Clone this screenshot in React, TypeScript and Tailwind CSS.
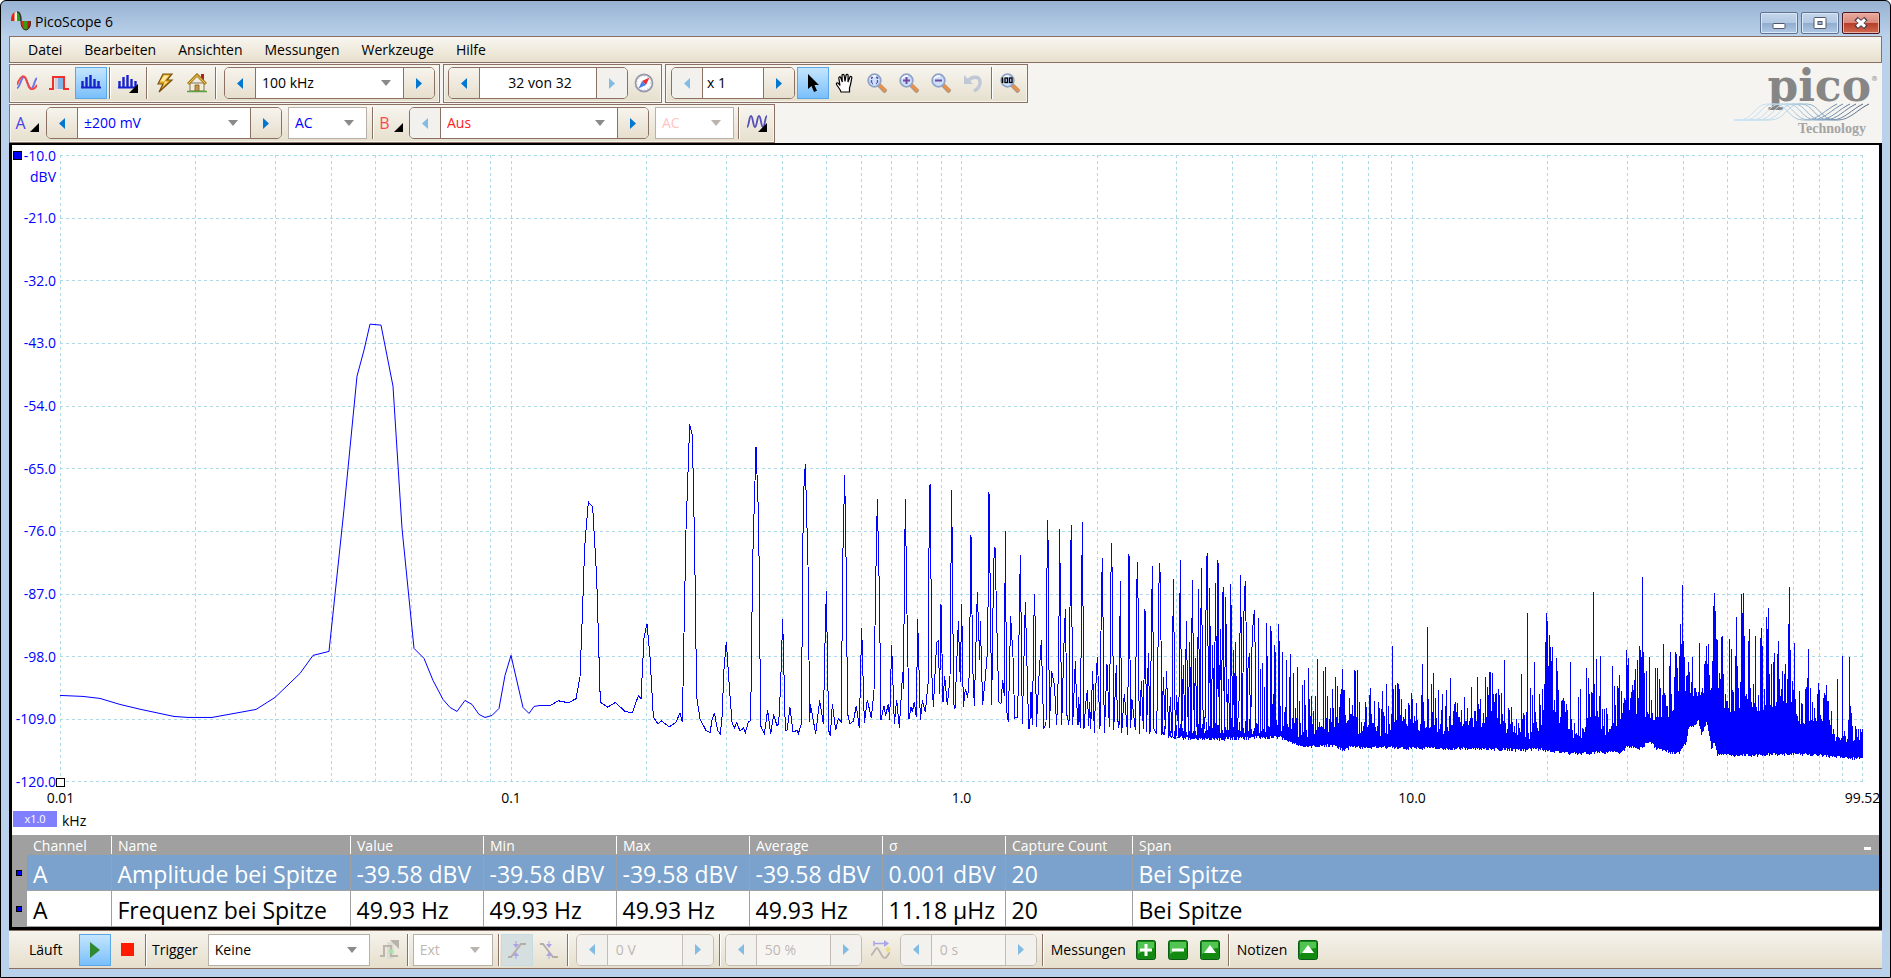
import { useMemo } from "react";
import type { ReactNode } from "react";
import clsx from "clsx";

type Point = [number, number];

const menuItems = ["Datei", "Bearbeiten", "Ansichten", "Messungen", "Werkzeuge", "Hilfe"];

const dbLabels = ["-10.0", "-21.0", "-32.0", "-43.0", "-54.0", "-65.0", "-76.0", "-87.0", "-98.0", "-109.0", "-120.0"];
const freqLabels = ["0.01", "0.1", "1.0", "10.0", "99.52"];

const columns = [
    { title: "Channel", width: "w-[84px]" },
    { title: "Name", width: "w-[239px]" },
    { title: "Value", width: "w-[133px]" },
    { title: "Min", width: "w-[133px]" },
    { title: "Max", width: "w-[133px]" },
    { title: "Average", width: "w-[133px]" },
    { title: "σ", width: "w-[123px]" },
    { title: "Capture Count", width: "w-[127px]" },
    { title: "Span", width: "" },
];

const measurements = [
    ["A", "Amplitude bei Spitze", "-39.58 dBV", "-39.58 dBV", "-39.58 dBV", "-39.58 dBV", "0.001 dBV", "20", "Bei Spitze"],
    ["A", "Frequenz bei Spitze", "49.93 Hz", "49.93 Hz", "49.93 Hz", "49.93 Hz", "11.18 µHz", "20", "Bei Spitze"],
];

/* ---------- spectrum data ---------- */

// Fundamental, 10 Hz up to about 115 Hz
const fundamental =
    "60,695 83,696 100,698 120,704 141,709 174,716 188,717 212,717 234,713 256,709 275,697 300,673 313,655 329,651 344,509 357,376 364,350 370,324 381,325 393,386 402,528 414,648 424,658 433,680 443,699 450,707 457,711 465,700 472,704 479,714 485,717 492,715 499,708 505,675 511,655 523,707 529,713 534,706 540,705";

// Harmonics up to 1.5 kHz
const harmonics =
    "0,916 30,916 55,901 85,907 108,895 120,830 128,620 134,440 145,305 158,320 170,530 181,905 203,920 226,906 255,933 277,937 295,886 303,895 312,712 321,670 330,770 340,950 354,970 364,961 388,979 408,966 420,937 427,965 432,700 438,390 449,72 457,105 464,445 470,890 480,955 498,990 510,997 516,960 523,937 533,990 541,1000 547,940 551,820 559,724 568,860 576,965 583,983 590,966 600,992 611,982 616,997 625,965 632,960 638,480 648,139 656,360 662,976 673,1000 683,928 692,1000 701,942 711,976 716,970 722,850 728,657 736,990 741,990 750,921 759,994 772,990 775,1000 784,970 790,290 796,190 804,495 809,965 811,910 827,1000 839,900 850,970 854,770 859,573 866,990 871,1006 877,910 887,989 895,955 904,965 908,490 914,225 920,590 922,937 930,970 940,962 949,916 958,982 965,682 973,967 982,898 994,953 1002,870 1007,550 1012,297 1018,570 1023,958 1032,916 1037,945 1045,910 1049,958 1055,735 1063,970 1070,898 1078,982 1088,815 1090,865 1096,297 1101,640 1107,955 1113,920 1117,935 1123,904 1129,950 1133,657 1141,960 1147,900 1156,935 1165,840 1168,260 1171,252 1175,810 1180,920 1190,725 1195,720 1199,880 1203,612 1209,905 1214,828 1222,915 1230,830 1235,270 1241,910 1245,926 1255,663 1261,845 1265,612 1270,920 1276,865 1283,892 1288,820 1293,405 1298,795 1303,917 1312,576 1319,780 1321,663 1328,914 1337,820 1343,745 1347,276 1355,914 1361,485 1365,440 1373,780 1377,905 1383,910 1388,838 1393,887 1396,393 1400,930 1405,965 1412,648 1419,770 1424,953 1433,950 1441,465 1447,970 1456,606 1466,985 1469,970";

// 1.4 kHz up to 5 kHz
const upperHarmonics =
    "89,745 93,635 97,735 103,342 106,437 109,740 118,570 124,480 131,745 138,730 142,120 145,205 148,742 155,573 163,612 170,735 176,550 179,145 185,735 192,490 196,387 201,705 207,733 211,270 214,135 218,735 226,543 229,645 234,735 236,650 241,742 247,126 252,745 257,672 262,630 266,738 269,666 272,745 278,573 283,758 287,627 292,531 300,745 304,360 307,234 313,758 317,662 321,552 328,740 334,189 337,292 341,750 349,555 352,710 357,742 361,303 365,758 373,640 383,765 387,222 392,742 396,657 406,748 410,322 413,246 418,762 424,603 430,745 435,387 440,755 445,519 450,762 457,258 462,745 470,760 478,249 481,288 486,765 490,591 496,745 499,573 507,765 511,651 516,758 520,297 526,765 530,645 536,760 541,240 545,765 550,555 555,770 559,423 565,765 569,486 573,773 577,300 583,765 586,534 592,778 595,327 600,770 604,264 610,770 616,700 619,246 622,219 626,766 629,322 633,758 638,495 642,760 647,309 650,765 654,240 658,783 661,447 665,745 667,360 670,321 673,783 677,351 682,740 685,597 690,770 692,312 695,490 698,765 701,510 705,770 707,486 710,780 718,645 722,285 726,765 733,333 737,303 741,770 743,576 748,519 752,765 755,525 760,411 764,390 768,760";

const midPeaks =
    "776,414 782,567 788,549 794,620 799,429 803,528 812,438 815,453 820,640 824,495 827,516 836,432 839,483 842,678 848,516 855,680 860,540 868,590 871,522 880,579 886,684 893,561 898,662 907,615 913,600 917,675 925,564 929,655 935,648 945,648 952,537 970,573 976,561 982,648 991,684 998,627 1006,591 1012,618 1018,680 1025,625 1028,567 1034,630 1048,654 1063,570 1066,573 1073,570 1096,666 1107,645 1112,624 1123,662 1135,666 1147,633 1159,612 1165,678 1177,498 1180,625 1186,615 1192,609 1195,612 1198,625 1204,657 1216,687 1234,639 1237,655 1249,669 1264,645 1268,552 1282,441 1285,657 1294,612 1299,579 1315,630 1327,642";
const midFloor = "280,748 380,755 450,760 570,770 720,770 840,765 870,780 900,792 1000,792 1035,806 1050,795 1100,796 1320,800";
const midBody = "280,750 450,750 570,752 620,735 700,742 768,738 850,740 900,752 960,745 1000,735 1030,690 1045,715 1080,745 1110,715 1150,752 1190,705 1215,735 1240,715 1265,735 1290,738 1320,742";

// 12.5 kHz up to the end of the span
const highPeaks =
    "7,462 19,450 31,414 43,490 73,471 94,441 103,512 112,411 115,492 121,477 136,411 142,441 145,465 149,396 152,396 157,399 160,460 167,462 178,465 184,459 193,360 208,510 214,500 229,537 244,402 253,525 262,219 271,444 277,465 283,366 298,462 307,447 313,430 316,306 319,219 322,243 325,378 328,285 331,321 334,363 337,321 349,354 352,393 355,450 364,483 370,474 391,366 415,471 421,447 439,384 445,414 448,460 460,156 463,432 470,357 481,348 487,507 502,522 517,378 523,438 532,438 538,405 544,453 559,330 562,375 565,354 571,474 580,450 583,420 586,387 592,360 598,318 601,330 604,351 607,111 610,336 613,399 619,393 628,351 634,480 646,384 652,384 658,417 661,444 670,312 676,465 688,378 691,336 694,460 703,411 706,336 709,340 712,384 718,348 721,252 724,312 727,135 730,303 733,351 739,408 745,366 748,396 754,426 757,351 763,444 775,456 778,309 784,456 793,370 796,363 799,318 802,372 805,312 817,363 820,198 823,159 826,213 829,297 832,300 838,399 844,291 847,288 850,402 859,483 868,297 874,327 880,456 886,348 889,231 892,378 901,426 904,162 907,219 910,159 913,288 919,460 925,303 928,267 931,444 940,432 946,288 955,465 961,294 964,264 967,318 979,231 982,267 985,204 988,402 994,372 1000,366 1003,339 1012,342 1015,303 1018,417 1027,393 1036,372 1042,417 1045,252 1048,141 1051,330 1057,423 1063,309 1066,477 1078,453 1084,489 1096,447 1099,441 1102,414 1105,327 1111,444 1117,486 1132,462 1135,429 1150,474 1153,459 1156,465 1159,435 1162,483 1168,540 1192,417 1207,348 1228,351 1231,498 1237,558 1249,567 1255,567 1264,576";
const highFloor =
    "0,622 60,620 150,620 240,625 300,622 400,636 470,632 540,632 560,615 600,620 630,595 645,618 690,632 720,632 740,598 745,560 770,545 775,535 785,578 800,540 815,622 823,598 832,640 900,640 1100,636 1200,646 1268,650";
const highBody =
    "0,560 60,550 130,540 160,500 200,560 250,580 300,560 320,430 350,520 400,570 430,580 460,500 500,575 520,545 560,500 600,500 640,520 700,520 720,450 760,455 830,430 860,500 890,510 920,480 970,500 1050,470 1080,550 1150,520 1180,580 1268,595";

const parse = (data: string): Point[] => data.split(" ").map((p) => p.split(",").map(Number) as Point);

function interpolate(points: Point[], x: number) {
    for (let i = 1; i < points.length; i++) {
        const [x0, y0] = points[i - 1];
        const [x1, y1] = points[i];
        if (x <= x1) return y0 + ((y1 - y0) * (x - x0)) / (x1 - x0);
    }
    return points[points.length - 1][1];
}

function noisePath(from: number, to: number, peaks: string, floor: string, body: string, spread: number) {
    const floorPoints = parse(floor);
    const bodyPoints = parse(body);
    const peakPoints = peaks ? parse(peaks) : [];
    let seed = 7919;
    const random = () => {
        seed = (seed * 16807) % 2147483647;
        return seed / 2147483647;
    };

    let d = "";
    for (let x = from; x <= to; x += 3) {
        const bottom = interpolate(floorPoints, x) + random() * 10;
        const noise = interpolate(bodyPoints, x) + random() * 24 - Math.pow(random(), 3) * spread;
        const peak = peakPoints.find(([px]) => Math.abs(px - x) <= 1);
        d += `M${x} ${Math.round(peak ? peak[1] : noise)}V${Math.round(bottom)}`;
    }
    return d;
}

function Spectrum() {
    const mid = useMemo(() => noisePath(772, 1320, midPeaks, midFloor, midBody, 90), []);
    const between = useMemo(() => noisePath(490, 769, "", midFloor, midBody, 45), []);
    const high = useMemo(() => noisePath(1, 1267, highPeaks, highFloor, highBody, 90), []);

    const verticals: number[] = [];
    for (let decade = 0; decade < 4; decade++) {
        for (let n = 1; n < 10; n++) {
            verticals.push(1 + 1352 * (decade + Math.log10(n)));
        }
    }
    verticals.push(5407);

    return (
        <svg
            viewBox="0 0 5409 1881"
            preserveAspectRatio="none"
            className="block h-full w-full fill-none [&_path]:[vector-effect:non-scaling-stroke] [&_polyline]:[vector-effect:non-scaling-stroke]"
            shapeRendering="crispEdges"
            role="img"
            aria-label="Spektrum"
        >
            <g stroke="#add8e6" strokeDasharray="3 3">
                {verticals.map((x) => (
                    <path key={x} d={`M${x} 0V1881`} />
                ))}
                {dbLabels.map((label, i) => (
                    <path key={label} d={`M0 ${1.5 + i * 187.8}H5409`} />
                ))}
            </g>
            <g stroke="#0000ff">
                <polyline points={fundamental} transform="translate(-180 -465) scale(3)" />
                <polyline points={harmonics} transform="translate(1440 735)" />
                <g transform="translate(2820 975)">
                    <polyline points={upperHarmonics} />
                    <path d={between} />
                    <path d={mid} />
                </g>
                <path d={high} transform="translate(4140 1155)" />
            </g>
        </svg>
    );
}

/* ---------- icons ---------- */

function Icon({ children, size = 20 }: { children: ReactNode; size?: number }) {
    return (
        <svg width={size} height={size} viewBox="0 0 20 20" fill="none" aria-hidden="true">
            {children}
        </svg>
    );
}

const AppIcon = () => (
    <svg width="20" height="20" viewBox="0 0 20 20" className="mt-1" aria-hidden="true">
        <path d="M0 10C0 4 2 1 5 1v9z" fill="#e02010" />
        <path d="M3.500 10V1.500L6 1v9z" fill="#f6f0d8" />
        <path d="M6 1c3 0 4 3 4 9H6z" fill="#22a022" />
        <path d="M10 10h3.500v9C11 18 10 15 10 10z" fill="#e03010" />
        <path d="M13 10h4v8.500l-2 .8-2-.5z" fill="#3a9a10" />
        <path d="M16.500 10H20c0 5-1.500 8-3.500 8.700z" fill="#b01818" />
        <path d="M6 1c3 0 4 3 4 9" fill="none" stroke="#303030" strokeWidth="1.500" />
        <path d="M10 10c0 5 1.500 8.500 5 9 3-.5 4.500-4 5-9" fill="none" stroke="#403020" />
    </svg>
);

const ScopeIcon = () => (
    <Icon>
        <path d="M0 15C3 15 4 4 7 4s4 12 7 12 3-9 6-11" stroke="#6a74ee" strokeWidth="2" />
        <path d="M0 12C3 3 7 1 9 6s3 11 7 10c2 0 3-2 4-4" stroke="#f04848" strokeWidth="2" />
    </Icon>
);

const PersistenceIcon = () => (
    <Icon>
        <path d="M8 4h6v12H8z" fill="#7fb4e4" />
        <path d="M6 4h3v12H6z" fill="#d7cbe0" />
        <path d="M0 16h4V4h11v12h5" stroke="#f0302c" strokeWidth="2" />
    </Icon>
);

const bars = "M1.500 8v7M5.500 4v11M9.500 2v13M13.500 6v9M17.500 8v7";

const SpectrumIcon = () => (
    <Icon>
        <path d={bars} stroke="#1822cc" strokeWidth="2.400" />
        <path d="M0 14.500h20" stroke="#1822cc" strokeWidth="2" />
    </Icon>
);

const SpectrumMenuIcon = () => (
    <Icon>
        <path d={bars} stroke="#1822cc" strokeWidth="2.400" />
        <path d="M0 14.500h18" stroke="#1822cc" strokeWidth="2" />
        <path d="M20 11v9h-9z" fill="#000" />
    </Icon>
);

const LightningIcon = () => (
    <Icon>
        <path d="M8 1h9l-5 6h5L4 19l4-8H3z" fill="#e0a418" stroke="#7a5210" strokeWidth="1.200" />
        <path d="M9 2.500h5L9 8.500h4L8 13l2-4.500H5z" fill="#ffe9a0" />
    </Icon>
);

const HomeIcon = () => (
    <Icon>
        <path d="M14 1h3v7h-3z" fill="#b02020" />
        <path d="M3 10h14v8H3z" fill="#f4edd8" stroke="#7c7458" />
        <path d="M1 11l9-9 9 9" stroke="#a87c18" strokeWidth="3" />
        <path d="M1.500 10.500L10 2.500l8.500 8" stroke="#f2cf60" strokeWidth="1" />
        <path d="M8 12h4v6H8z" fill="#c49a50" stroke="#7c5c20" strokeWidth=".8" />
        <path d="M0 18.500h20" stroke="#5da040" strokeWidth="1.500" />
    </Icon>
);

const CompassIcon = () => (
    <Icon>
        <circle cx="10" cy="10" r="8.500" fill="#fff" stroke="#9a9aac" strokeWidth="1.800" />
        <circle cx="10" cy="10" r="6.500" stroke="#c4c8d8" strokeDasharray="1 2" />
        <path d="M15.500 4.500l-3.500 7.500-4-4z" fill="#e83030" />
        <path d="M4.500 15.500l3.500-7.500 4 4z" fill="#4a80e8" />
    </Icon>
);

const PointerIcon = () => (
    <Icon>
        <path d="M5 1v15l3.500-3 2.500 6 3-1.200-2.500-5.800H16z" fill="#000" />
    </Icon>
);

const HandIcon = () => (
    <Icon>
        <path
            d="M6 19c-.5-2.500-3-5-4.500-7.500-.6-1.200.8-2.200 1.800-1.200L5 12.500 3.800 5.200c-.2-1.500 1.600-1.800 2-.4L7.300 9 7 2.500c0-1.500 2-1.500 2.200 0L10 8.500l1-6.200c.3-1.400 2.200-1.200 2.100.3L13 9l1.800-4.800c.6-1.300 2.300-.7 2 .7-.7 3-1 7-2.300 10.100L14.500 19z"
            fill="#fff"
            stroke="#000"
            strokeWidth="1.200"
        />
    </Icon>
);

function ZoomIcon({ children }: { children: ReactNode }) {
    return (
        <Icon>
            <path d="M12 12l7 7" stroke="#a8998c" strokeWidth="4.500" />
            <path d="M12.500 12l6 6" stroke="#ee9040" strokeWidth="2.600" />
            <circle cx="7.500" cy="7.500" r="6.300" fill="#cbe0fb" stroke="#8fa3c8" strokeWidth="1.800" />
            <path d="M3 6c1-2.500 4-3.500 6-2.500" stroke="#fff" strokeWidth="1.500" />
            {children}
        </Icon>
    );
}

const UndoIcon = () => (
    <Icon>
        <path d="M5 8c4-5 11-5 12 0 .8 4-2 8-6 10" stroke="#c0c8d8" strokeWidth="3.500" />
        <path d="M1 2v9h9z" fill="#c0c8d8" />
    </Icon>
);

const AwgIcon = () => (
    <Icon>
        <path d="M0 14C2 14 2 3 4 3s2 11 4 11 2-11 4-11 2 11 4 11 2-11 4-11" stroke="#5550b8" strokeWidth="1.800" />
        <path d="M20 10v9h-9z" fill="#000" />
    </Icon>
);

const AdvancedTriggerIcon = () => (
    <Icon>
        <path d="M8 2h7v17H8z" fill="#d5dcd5" />
        <path d="M1 16h4V6h7v10h7" stroke="#b0a8a0" strokeWidth="2" />
        <circle cx="12" cy="11.500" r="2.300" fill="#98e098" />
        <path d="M11 0h9v9z" fill="#aaa49c" />
    </Icon>
);

const RisingIcon = () => (
    <Icon>
        <path d="M1 17h3L14 4h5" stroke="#b5ada5" strokeWidth="1.800" />
        <path d="M9 1v6M9 13v6" stroke="#aaa4e8" />
        <path d="M6 4h6L9 8zM6 16h6L9 12z" fill="#aaa4e8" />
    </Icon>
);

const FallingIcon = () => (
    <Icon>
        <path d="M1 4h3l10 13h5" stroke="#b5ada5" strokeWidth="1.800" />
        <path d="M10 1v6M10 13v6" stroke="#aaa4e8" />
        <path d="M7 4h6l-3 4zM7 16h6l-3-4z" fill="#aaa4e8" />
    </Icon>
);

const DelayIcon = () => (
    <Icon>
        <path d="M0 15C2 15 4 8 6 8s5 11 8 10 3-5 5-5" stroke="#bdb5ad" strokeWidth="1.800" />
        <path d="M3 1v5M3 3.500h11" stroke="#aaa4e8" strokeWidth="1.500" />
        <path d="M13 0l5 3.500L13 7z" fill="#aaa4e8" />
        <path d="M17 6l3 3.500-3 3.500-3-3.500z" fill="#e8e08c" />
    </Icon>
);

function GreenIcon({ path }: { path: string }) {
    return (
        <svg width="20" height="20" viewBox="0 0 20 20" aria-hidden="true">
            <rect x=".5" y=".5" width="19" height="19" rx="2" fill="#158a12" stroke="#0a5a18" />
            <path d="M2 2h16v6c-5 0-11 2-16 6z" fill="#52c452" />
            <path d={path} fill="#fff" />
        </svg>
    );
}

function Triangle({ dir, className }: { dir: "left" | "right" | "down"; className?: string }) {
    const shape = { left: "M6 0v11L0 5.500z", right: "M0 0v11l6-5.500z", down: "M0 0h10L5 6z" }[dir];
    return (
        <svg width={dir === "down" ? 10 : 6} height={dir === "down" ? 6 : 11} className={className} aria-hidden="true">
            <path d={shape} fill="currentColor" />
        </svg>
    );
}

/* ---------- controls ---------- */

const Separator = () => <span className="mx-[2px] h-8 w-px shrink-0 bg-[#8b7163] shadow-[1px_0_#fff]" />;

function Tool({ label, active, disabled, children }: { label: string; active?: boolean; disabled?: boolean; children: ReactNode }) {
    return (
        <button
            type="button"
            aria-label={label}
            disabled={disabled}
            className={clsx(
                "flex h-8 w-8 shrink-0 items-center justify-center",
                active && "border border-[#5aa7e8] bg-linear-to-b from-[#c4e5fd] to-[#79bffb]"
            )}
        >
            {children}
        </button>
    );
}

function Combo({ label, value, className, disabled, bare }: { label: string; value: string; className?: string; disabled?: boolean; bare?: boolean }) {
    return (
        <span className={clsx("relative flex h-8 shrink-0 items-center bg-white", !bare && "border border-[#b9b0a8]", className)}>
            <select
                aria-label={label}
                disabled={disabled}
                className="h-full w-full appearance-none bg-transparent pr-6 pl-[6px] outline-none disabled:opacity-100"
            >
                <option>{value}</option>
            </select>
            <Triangle dir="down" className={clsx("pointer-events-none absolute right-3", disabled ? "text-[#b9b4ae]" : "text-[#8a8a8a]")} />
        </span>
    );
}

interface SpinnerProps {
    label: string;
    className: string;
    children: ReactNode;
    prevDisabled?: boolean;
    nextDisabled?: boolean;
}

function Spinner({ label, className, children, prevDisabled, nextDisabled }: SpinnerProps) {
    const allDisabled = prevDisabled && nextDisabled;
    const line = allDisabled ? "border-[#c4bdb5]" : "border-[#8b7163]";
    const button = "flex w-[30px] shrink-0 items-center justify-center";
    return (
        <div className={clsx("flex h-8 shrink-0 overflow-hidden rounded-[5px] border", line, className)}>
            <button
                type="button"
                aria-label={`${label} zurück`}
                disabled={prevDisabled}
                className={clsx(button, prevDisabled ? "bg-[#f3f1ed] text-[#80bce4]" : "bg-linear-to-b from-[#f7f4ee] to-[#e7dfcd] text-[#0078d0]")}
            >
                <Triangle dir="left" />
            </button>
            <div className={clsx("flex min-w-0 flex-1 items-center border-x", line, allDisabled ? "bg-[#f7f5f2] text-[#bdb8b2]" : "bg-white")}>
                {children}
            </div>
            <button
                type="button"
                aria-label={`${label} weiter`}
                disabled={nextDisabled}
                className={clsx(button, nextDisabled ? "bg-[#f3f1ed] text-[#80bce4]" : "bg-linear-to-b from-[#f7f4ee] to-[#e7dfcd] text-[#0078d0]")}
            >
                <Triangle dir="right" />
            </button>
        </div>
    );
}

function ToolbarGroup({ children }: { children: ReactNode }) {
    return (
        <div className="flex items-center border border-[#8b7163] bg-linear-to-b from-[#f8f6f1] to-[#e6dfcd] px-px pt-[2px] pb-[3px] shadow-[inset_0_0_0_1px_#f7f4ee]">
            {children}
        </div>
    );
}

function ChannelButton({ name, className }: { name: string; className: string }) {
    return (
        <button type="button" className={clsx("flex h-8 w-8 shrink-0 items-center justify-center gap-1 text-base", className)} aria-label={`Kanal ${name}`}>
            {name}
            <svg width="9" height="9" className="mt-2" aria-hidden="true">
                <path d="M9 0v9H0z" fill="#000" />
            </svg>
        </button>
    );
}

/* ---------- window parts ---------- */

function TitleBar() {
    const frame = "flex h-[22px] w-[38px] items-center justify-center rounded-[2px] border";
    const plain = "border-[#5d7391] bg-[linear-gradient(#c3d5ea_0%,#b3c9e3_48%,#8fabce_50%,#b1c9e5_100%)] shadow-[inset_0_0_0_1px_#dce8f5]";
    return (
        <header className="flex h-[35px] shrink-0 items-center px-[2px]">
            <AppIcon />
            <h1 className="ml-1 flex-1 pt-[6px] text-[14px]">PicoScope 6</h1>
            <div className="flex gap-[3px] pt-2">
                <button type="button" aria-label="Minimieren" className={clsx(frame, plain)}>
                    <svg width="14" height="14" aria-hidden="true">
                        <rect x="1" y="7.500" width="12" height="5" rx="1" fill="#fff" stroke="#50586a" />
                    </svg>
                </button>
                <button type="button" aria-label="Maximieren" className={clsx(frame, plain)}>
                    <svg width="14" height="14" aria-hidden="true">
                        <rect x="1" y="1.500" width="12" height="11" rx="1" fill="#fff" stroke="#50586a" />
                        <rect x="5" y="5.500" width="4" height="3" fill="#9fb8d8" stroke="#50586a" />
                    </svg>
                </button>
                <button
                    type="button"
                    aria-label="Schließen"
                    className={clsx(frame, "border-[#4a1420] bg-[linear-gradient(#e9a99d_0%,#d98a7c_48%,#b83c26_50%,#cf6a50_100%)] shadow-[inset_0_0_0_1px_#eab5a8]")}
                >
                    <svg width="14" height="14" aria-hidden="true">
                        <path d="M2 2.500l10 9M12 2.500l-10 9" stroke="#50404c" strokeWidth="5" />
                        <path d="M3 3.500l8 7M11 3.500l-8 7" stroke="#fff" strokeWidth="3" />
                    </svg>
                </button>
            </div>
        </header>
    );
}

function Logo() {
    const strands = [5, 11, 18, 24, 31, 37];
    return (
        <div className="relative mr-1 w-[144px] shrink-0 self-stretch text-[#868686]">
            <div className="flex justify-end font-['DejaVu_Serif',serif]">
                <span className="text-[44px] leading-[46px] font-bold">pico</span>
                <span className="mt-3 text-[7px] leading-[8px]">®</span>
            </div>
            <svg viewBox="0 0 142 20" className="absolute top-[39px] left-0 h-5 w-[142px] fill-none" aria-hidden="true">
                <defs>
                    <linearGradient id="wave" x1="0" x2="142" y1="0" y2="0" gradientUnits="userSpaceOnUse">
                        <stop offset="0" stopColor="#cfe6f5" />
                        <stop offset=".35" stopColor="#bcd8ea" />
                        <stop offset=".6" stopColor="#86a6c4" />
                        <stop offset="1" stopColor="#46546f" />
                    </linearGradient>
                </defs>
                {strands.map((x) => (
                    <path key={x} d={`M0 18H${x}c14 0 16-16 28-16h8c12 0 14 16 28 16h3c12 0 20-11 31-16`} stroke="url(#wave)" strokeWidth="1" />
                ))}
            </svg>
            <p className="absolute top-[58px] right-3 font-['Liberation_Serif',serif] text-[14px] leading-4 font-bold text-[#a4a4a4]">Technology</p>
        </div>
    );
}

function Toolbars() {
    return (
        <div className="flex justify-between bg-[#f6f4f0]">
            <div className="flex flex-col items-start gap-px pt-px">
                <div className="flex gap-[3px]" role="toolbar" aria-label="Ansicht">
                    <ToolbarGroup>
                        <Tool label="Oszilloskop"><ScopeIcon /></Tool>
                        <Tool label="Persistenz"><PersistenceIcon /></Tool>
                        <Tool label="Spektrum" active><SpectrumIcon /></Tool>
                        <Separator />
                        <Tool label="Spektrumoptionen"><SpectrumMenuIcon /></Tool>
                        <Separator />
                        <Tool label="Automatisch"><LightningIcon /></Tool>
                        <Tool label="Startseite"><HomeIcon /></Tool>
                        <Separator />
                        <div className="mr-[3px] ml-[6px] flex">
                            <Spinner label="Frequenzbereich" className="w-[211px]">
                                <Combo bare label="Frequenzbereich" value="100 kHz" className="w-full" />
                            </Spinner>
                        </div>
                    </ToolbarGroup>
                    <ToolbarGroup>
                        <div className="ml-[3px] flex">
                            <Spinner label="Puffer" className="w-[180px]" nextDisabled>
                                <input aria-label="Puffer" defaultValue="32 von 32" className="w-full bg-transparent pl-1 text-center outline-none" />
                            </Spinner>
                        </div>
                        <Tool label="Puffernavigator"><CompassIcon /></Tool>
                    </ToolbarGroup>
                    <ToolbarGroup>
                        <div className="mr-[2px] ml-1 flex">
                            <Spinner label="Zoomfaktor" className="w-[124px]" prevDisabled>
                                <input aria-label="Zoomfaktor" defaultValue="x 1" className="w-full bg-transparent pl-1 outline-none" />
                            </Spinner>
                        </div>
                        <Tool label="Auswahl" active><PointerIcon /></Tool>
                        <Tool label="Hand"><HandIcon /></Tool>
                        <Tool label="Bereich zoomen">
                            <ZoomIcon>
                                <path d="M6 4.500H4.500v6H6M9 4.500h1.500v6H9" stroke="#6458a8" strokeWidth="1.400" strokeDasharray="3 1" />
                            </ZoomIcon>
                        </Tool>
                        <Tool label="Vergrößern">
                            <ZoomIcon>
                                <path d="M4 7.500h7M7.500 4v7" stroke="#7448a0" strokeWidth="2" />
                            </ZoomIcon>
                        </Tool>
                        <Tool label="Verkleinern">
                            <ZoomIcon>
                                <path d="M4 7.500h7" stroke="#7448a0" strokeWidth="2" />
                            </ZoomIcon>
                        </Tool>
                        <Tool label="Zoom rückgängig" disabled><UndoIcon /></Tool>
                        <Separator />
                        <Tool label="100 %">
                            <ZoomIcon>
                                <path d="M2.500 4.500v5.500" stroke="#000" strokeWidth="1.600" />
                                <rect x="5" y="5" width="2.500" height="4.500" stroke="#000" strokeWidth="1.300" />
                                <rect x="9.500" y="5" width="2.500" height="4.500" stroke="#000" strokeWidth="1.300" />
                            </ZoomIcon>
                        </Tool>
                    </ToolbarGroup>
                </div>
                <div className="flex" role="toolbar" aria-label="Kanäle">
                    <ToolbarGroup>
                        <ChannelButton name="A" className="text-[#4a40e8]" />
                        <div className="mx-[3px] flex gap-[6px] text-[#0000ff]">
                            <Spinner label="Bereich A" className="w-[236px]">
                                <Combo bare label="Bereich A" value="±200 mV" className="w-full" />
                            </Spinner>
                            <Combo label="Kopplung A" value="AC" className="w-[79px]" />
                        </div>
                        <Separator />
                        <ChannelButton name="B" className="text-[#ff4a4a]" />
                        <div className="mx-[2px] flex gap-[6px] text-[#ff2020]">
                            <Spinner label="Bereich B" className="w-[240px]" prevDisabled>
                                <Combo bare label="Bereich B" value="Aus" className="w-full" />
                            </Spinner>
                            <Combo label="Kopplung B" value="AC" className="w-[79px] text-[#ffc4c4]" disabled />
                        </div>
                        <Separator />
                        <Tool label="Signalgenerator"><AwgIcon /></Tool>
                    </ToolbarGroup>
                </div>
            </div>
            <Logo />
        </div>
    );
}

function ChartPanel() {
    return (
        <section className="flex min-h-0 flex-1 flex-col bg-white pt-[10px]">
            <div className="flex min-h-0 flex-1 pr-4">
                <div className="flex w-12 shrink-0 flex-col justify-between pr-1 text-[#0000ff]">
                    {dbLabels.map((label, i) => (
                        <div key={label} className="relative flex h-px items-center justify-end">
                            {i === 0 && <span className="absolute left-px h-[9px] w-[9px] border border-black bg-[#0000ff]" />}
                            <span>{label}</span>
                            {i === 0 && <span className="absolute top-3 right-0">dBV</span>}
                        </div>
                    ))}
                </div>
                <div className="relative min-w-0 flex-1">
                    <div className="absolute inset-0">
                        <Spectrum />
                    </div>
                    <span className="absolute -bottom-1 -left-1 h-[9px] w-[9px] border border-black bg-white" />
                </div>
            </div>
            <div className="mr-4 ml-12 flex h-7 justify-between pt-[2px]">
                {freqLabels.map((label) => (
                    <span key={label} className="flex w-px items-center justify-center">{label}</span>
                ))}
            </div>
            <div className="flex h-6 items-start gap-[5px] pl-px">
                <span className="h-4 w-11 bg-[#8080ff] text-center text-[11px] leading-4 text-white">x1.0</span>
                <span>kHz</span>
            </div>
        </section>
    );
}

function MeasurementTable() {
    return (
        <table className="w-full table-fixed border-collapse text-left whitespace-nowrap">
            <thead className="bg-[#a0a0a0] text-white">
                <tr className="h-5">
                    <th className="w-[15px]" aria-label="Markierung" />
                    {columns.map(({ title, width }, i) => (
                        <th key={title} scope="col" className={clsx("p-0 leading-5 font-normal", width)}>
                            <span className={clsx("flex h-[18px] items-center justify-between pt-[3px] pl-[6px]", i > 0 && "border-l border-white")}>
                                {title}
                                {title === "Span" && (
                                    <button type="button" aria-label="Tabelle minimieren" className="mt-1 mr-2 h-[3px] w-[7px] bg-white" />
                                )}
                            </span>
                        </th>
                    ))}
                </tr>
            </thead>
            <tbody className="text-[23px] leading-[32px]">
                {measurements.map((row, r) => (
                    <tr key={row[1]} className={clsx("h-9", r === 0 ? "bg-[#7aa2cc] text-white" : "bg-white text-black")}>
                        <td className="bg-[#a0a0a0] p-0">
                            <span className="ml-1 block h-[6px] w-[6px] border border-black bg-[#0000ff]" />
                        </td>
                        {row.map((cell, i) => (
                            <td key={i} className={clsx("border-b border-[#a0a0a0] pt-[3px] pr-0 pb-0 pl-[6px]", i > 0 && "border-l")}>
                                {cell}
                            </td>
                        ))}
                    </tr>
                ))}
            </tbody>
        </table>
    );
}

function StatusBar() {
    return (
        <footer className="flex h-[39px] shrink-0 items-center border-y border-[#8b7163] bg-linear-to-b from-[#f6f3ec] to-[#e6dfcd]">
            <span className="w-[70px] pl-5">Läuft</span>
            <Tool label="Start" active>
                <svg width="10" height="16" aria-hidden="true">
                    <path d="M0 0v16l10-8z" fill="#2f8a2f" />
                </svg>
            </Tool>
            <Tool label="Stopp">
                <span className="h-[13px] w-[13px] bg-[#ff1a00]" />
            </Tool>
            <Separator />
            <label className="flex items-center gap-[10px] pl-1">
                Trigger
                <Combo label="Trigger" value="Keine" className="w-[162px]" />
            </label>
            <div className="ml-[3px] flex opacity-80">
                <Tool label="Erweiterter Trigger" disabled><AdvancedTriggerIcon /></Tool>
            </div>
            <Separator />
            <div className="mx-[3px] flex text-[#bdb8b2]">
                <Combo label="Triggerquelle" value="Ext" className="w-[80px]" disabled />
            </div>
            <Separator />
            <button type="button" disabled aria-label="Steigende Flanke" className="flex h-8 w-8 items-center justify-center border border-[#c5dbe2] bg-[#d5dfdf]">
                <RisingIcon />
            </button>
            <Tool label="Fallende Flanke" disabled><FallingIcon /></Tool>
            <Separator />
            <div className="mr-[3px] ml-[6px] flex">
                <Spinner label="Schwelle" className="w-[138px]" prevDisabled nextDisabled>
                    <input aria-label="Schwelle" disabled defaultValue="0 V" className="w-full bg-transparent pl-2" />
                </Spinner>
            </div>
            <Separator />
            <div className="mx-[3px] flex items-center gap-[3px]">
                <Spinner label="Vortrigger" className="w-[137px]" prevDisabled nextDisabled>
                    <input aria-label="Vortrigger" disabled defaultValue="50 %" className="w-full bg-transparent pl-2" />
                </Spinner>
                <Tool label="Verzögerung" disabled><DelayIcon /></Tool>
                <Spinner label="Nachtrigger" className="w-[137px]" prevDisabled nextDisabled>
                    <input aria-label="Nachtrigger" disabled defaultValue="0 s" className="w-full bg-transparent pl-2" />
                </Spinner>
            </div>
            <Separator />
            <span className="w-[85px] pl-[6px]">Messungen</span>
            <Tool label="Messung hinzufügen"><GreenIcon path="M8.500 4h3v4.500H16v3h-4.500V16h-3v-4.500H4v-3h4.500z" /></Tool>
            <Tool label="Messung entfernen"><GreenIcon path="M4 8.500h12v3H4z" /></Tool>
            <Tool label="Messungen anzeigen"><GreenIcon path="M10 5l6 8H4z" /></Tool>
            <Separator />
            <span className="w-[61px] pl-[6px]">Notizen</span>
            <Tool label="Notizen anzeigen"><GreenIcon path="M10 5l6 8H4z" /></Tool>
        </footer>
    );
}

export default function App() {
    return (
        <div className="flex h-screen flex-col overflow-hidden rounded-t-[6px] border border-black bg-[#b9d1ea] bg-[linear-gradient(#98b2d2_0,#b9d1ea_35px)] px-2 pb-[8px] font-['Open_Sans',sans-serif] text-[14px] leading-5 text-black">
            <TitleBar />
            <nav className="flex h-[27px] shrink-0 items-center gap-[22px] border border-[#8b7163] bg-linear-to-b from-[#f8f6f0] to-[#e8e0cd] pl-[18px]">
                {menuItems.map((item) => (
                    <button key={item} type="button">{item}</button>
                ))}
            </nav>
            <Toolbars />
            <main className="flex min-h-0 flex-1 flex-col border-[3px] border-t-2 border-black">
                <ChartPanel />
                <MeasurementTable />
            </main>
            <StatusBar />
        </div>
    );
}
